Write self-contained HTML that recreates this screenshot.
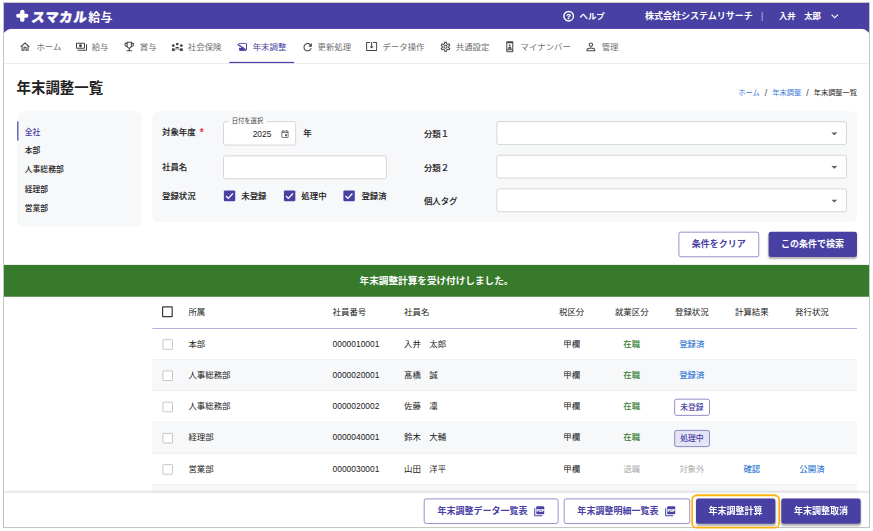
<!DOCTYPE html>
<html lang="ja">
<head>
<meta charset="utf-8">
<title>年末調整一覧</title>
<style>
*{box-sizing:border-box;margin:0;padding:0}
html,body{width:873px;height:531px;background:#fff;overflow:hidden}
body{position:relative;font-family:"Liberation Sans","Noto Sans CJK JP",sans-serif;color:#222}
#frame{position:absolute;left:3px;top:2px;width:867px;height:526px;border:1px solid #c6c6c5;background:#fff}
#app{position:absolute;left:0;top:0;width:1440px;height:872px;transform-origin:0 0;transform:scale(0.6007);background:#fff;font-size:14px;line-height:1.5}
.abs{position:absolute}
/* header */
#hdr{position:absolute;left:0;top:0;width:1440px;height:60px;background:#4840a3;color:#fff}
#logo{position:absolute;left:46px;top:7.700px;white-space:nowrap;line-height:32px;height:32px}
#logo .s{display:inline-block;font-size:22px;font-weight:900;transform:skewX(-7deg);letter-spacing:1.400px;-webkit-text-stroke:.7px #fff}
#logo .k{display:inline-block;font-weight:700;font-size:20px;margin-left:1.500px;position:relative;top:.4px}
.hr{position:absolute;top:0;height:44px;line-height:44px;font-size:14px;font-weight:700;white-space:nowrap}
/* nav */
#navclip{position:absolute;left:0;top:43.300px;width:1440px;height:58.700px;overflow:hidden}
#nav{position:absolute;left:-3px;top:0;width:1446px;height:57.700px;background:#fff;border-radius:16px 16px 0 0;border-bottom:1px solid #d6d6d6}
#nav>*{margin-left:3px;margin-top:.7px}
.tx{position:absolute;top:0;height:56px;line-height:59px;font-size:14px;color:#6e6e6e;white-space:nowrap}
.ic{position:absolute;fill:#444}
.tx.on{color:#4840a3}
.ic.on{fill:#4840a3}
#ul{position:absolute;top:54px;height:2px;background:#4840a3}
h1{position:absolute;left:21px;top:123px;font-size:24px;font-weight:700;line-height:36px;color:#222}
#bc{position:absolute;right:20px;top:139.600px;font-size:12px;line-height:18px;color:#222;white-space:nowrap}
#bc a{color:#3b78d8;text-decoration:none}
#bc i{font-style:normal;margin:0 8.500px;font-size:14.500px;line-height:10px;color:#444;position:relative;top:1.800px}
.panel{position:absolute;background:#f7f8fa;border-radius:10px}
#side div{position:absolute;left:12.500px;font-size:13px;font-weight:500;line-height:20px;white-space:nowrap}
.lbl{position:absolute;font-size:14px;font-weight:500;-webkit-text-stroke:.18px #222;line-height:20px;white-space:nowrap;color:#222}
.inp{position:absolute;background:#fff;border:1px solid #bebebe;border-radius:4px}
.cb{position:absolute;width:18.500px;height:18.500px;background:#4840a3;border-radius:2px}
.cb svg{position:absolute;left:0;top:0;width:18.500px;height:18.500px}
.btn{position:absolute;height:42px;line-height:40px;border-radius:4px;font-size:15px;font-weight:700;text-align:center;white-space:nowrap}
.btn.o{border:1.500px solid #5149a8;color:#4840a3;background:#fff}
.btn.f{background:#4840a3;color:#fff;line-height:42px;box-shadow:0 2px 3px rgba(0,0,0,.3)}
#banner{position:absolute;left:0;top:436px;width:1440px;height:52.600px;background:#377a2c;color:#fff;font-weight:700;font-size:16px;line-height:54px;text-align:center}
#tbl{position:absolute;left:247px;top:488px;width:1173px}
.row{position:absolute;left:0;width:1173px;height:52px;border-bottom:1px solid #e4e4e4}
.row.g{background:#f7f8fa}
.row div,.th div{position:absolute;top:0;height:52px;line-height:51px;font-size:14px;white-space:nowrap}
.c{text-align:center;width:100px}
.th div{line-height:55px}
.chk{position:absolute;left:17px;top:18px;width:16.500px;height:16.500px;border:1.600px solid #a2a2a2;border-radius:1.500px;background:#fff}
.grn{color:#3a7f34;font-weight:500}
.blu{color:#3b7fd6;font-weight:500}
.gry{color:#ababab}
.row .badge{position:absolute;top:12.500px;height:28.500px;line-height:26.500px;border:1px solid #4840a3;border-radius:4px;color:#4840a3;font-size:13px;font-weight:500;text-align:center}
#bar{position:absolute;left:0;top:813.500px;width:1440px;height:58.500px;background:#fff;border-top:1px solid #d9d9d9;box-shadow:0 -1px 3px rgba(0,0,0,.10)}
</style>
</head>
<body>
<div id="frame">
<div id="app">
  <div id="hdr">
    <svg class="abs" style="left:19.800px;top:11.400px;width:21px;height:20.500px" viewBox="0 0 19 20.500" preserveAspectRatio="none"><path d="M9.500 3.400V17.100M3.400 10.250H15.600" stroke="#fff" stroke-width="6.600" stroke-linecap="round" fill="none"/></svg><div id="logo"><span class="s">スマカル</span><span class="k">給与</span></div>
    <svg class="abs" style="left:928.700px;top:10.700px;width:22px;height:22px" viewBox="0 0 24 24"><circle cx="12" cy="12" r="8.700" fill="none" stroke="#fff" stroke-width="2.600"/><text x="12" y="17" font-size="14" font-weight="700" fill="#fff" stroke="#fff" stroke-width=".5" text-anchor="middle" font-family="Liberation Sans, sans-serif">?</text></svg><div class="hr" style="left:958px">ヘルプ</div>
    <div class="hr" style="left:1067px;font-size:15px">株式会社システムリサーチ</div>
    <div class="hr" style="left:1260px;font-weight:400;opacity:.7">|</div>
    <div class="hr" style="left:1290px">入井　太郎</div><svg class="abs" style="left:1371px;top:10px;width:24px;height:24px;fill:#fff" viewBox="0 0 24 24"><path d="M16.590 8.590L12 13.170 7.410 8.590 6 10l6 6 6-6z"/></svg>
  </div>
  <div id="navclip"><div id="nav">
    <svg class="ic" style="left:25.3px;top:19px;width:20px;height:20px" viewBox="0 0 24 24"><path d="M12 5.690l5 4.500V18h-2v-6H9v6H7v-7.810l5-4.500M12 3L2 12h3v8h6v-6h2v6h6v-8h3L12 3z"/></svg><span class="tx" style="left:54px">ホーム</span>
    <svg class="ic" style="left:118.9px;top:19.1px;width:20px;height:20px" viewBox="0 0 24 24"><path d="M19 14V6c0-1.100-.9-2-2-2H3c-1.100 0-2 .9-2 2v8c0 1.100.9 2 2 2h14c1.100 0 2-.9 2-2zm-2 0H3V6h14v8zm-7-7c-1.660 0-3 1.340-3 3s1.340 3 3 3 3-1.340 3-3-1.340-3-3-3zm13 0v11c0 1.100-.9 2-2 2H4v-2h17V7h2z"/></svg><span class="tx" style="left:146px">給与</span>
    <svg class="ic" style="left:198.3px;top:18.3px;width:21px;height:21px" viewBox="0 0 24 24"><path d="M19 5h-2V3H7v2H5c-1.100 0-2 .9-2 2v1c0 2.550 1.920 4.630 4.390 4.940.630 1.500 1.980 2.630 3.610 2.960V19H7v2h10v-2h-4v-3.100c1.630-.330 2.980-1.460 3.610-2.960C19.080 12.630 21 10.550 21 8V7c0-1.100-.9-2-2-2zM5 8V7h2v3.820C5.840 10.400 5 9.300 5 8zm7 6c-1.650 0-3-1.350-3-3V5h6v6c0 1.650-1.350 3-3 3zm7-6c0 1.300-.840 2.400-2 2.820V7h2v1z"/></svg><span class="tx" style="left:226px">賞与</span>
    <svg class="ic" style="left:279.300px;top:21.900px;width:19px;height:14px" viewBox="0 0 19 14"><circle cx="2.800" cy="4.900" r="2.300"/><circle cx="9.450" cy="2.400" r="2.300"/><circle cx="16.200" cy="4.900" r="2.300"/><path d="M.3 13.900V11a1.700 1.700 0 0 1 1.700-1.700H3.700A1.700 1.700 0 0 1 5.400 11v2.900z"/><path d="M13.600 13.900V11a1.700 1.700 0 0 1 1.700-1.700H17a1.700 1.700 0 0 1 1.700 1.700v2.900z"/><path d="M6.300 9.400V8.700a1.500 1.500 0 0 1 1.500-1.500H11.100a1.500 1.500 0 0 1 1.500 1.500v.7z"/><path d="M6.300 9.400H12.600L13.500 11.700H5.400z" opacity=".45"/></svg><span class="tx" style="left:306px">社会保険</span>
    <svg class="ic on" style="left:388.200px;top:21.900px;width:16.600px;height:13.800px;color:#4840a3" viewBox="0 0 17 14"><path d="M5.200 1.050H15a1 1 0 0 1 1 1V12a1 1 0 0 1-1 1H5a1 1 0 0 1-1-1V8.700" fill="none" stroke="currentColor" stroke-width="1.700"/><path d="M0 3L5.600 0.200V2z"/><path d="M4 9.200H12.500V13.500H4z"/><path d="M12.500 10.500H15.500V13.500H12.500z" opacity=".7"/><path d="M1.200 2.900L12.500 10.400" fill="none" stroke="currentColor" stroke-width="2.600"/><path d="M4.200 3.300L11 7.800" fill="none" stroke="#fff" stroke-width="1.400" stroke-dasharray="1.600 2.800"/></svg><span class="tx on" style="left:414px">年末調整</span>
    <svg class="ic" style="left:494.500px;top:18.700px;width:21px;height:21px" viewBox="0 0 24 24"><path d="M17.650 6.350C16.200 4.900 14.210 4 12 4c-4.420 0-7.990 3.580-7.990 8s3.570 8 7.990 8c3.730 0 6.840-2.550 7.730-6h-2.080c-.820 2.330-3.040 4-5.650 4-3.310 0-6-2.690-6-6s2.690-6 6-6c1.660 0 3.140.690 4.220 1.780L13 11h7V4l-2.350 2.350z"/></svg><span class="tx" style="left:522px">更新処理</span>
    <svg class="ic" style="left:602.3px;top:18.1px;width:20px;height:20px" viewBox="0 0 24 24"><path d="M12 16.500l4-4h-3v-9h-2v9H8l4 4zm9-13h-6v1.990h6v14.030H3V5.490h6V3.500H3c-1.100 0-2 .9-2 2v14c0 1.100.9 2 2 2h18c1.100 0 2-.9 2-2v-14c0-1.100-.9-2-2-2z"/></svg><span class="tx" style="left:630px">データ操作</span>
    <svg class="ic" style="left:724.5px;top:19.1px;width:20px;height:20px" viewBox="0 0 24 24"><path d="M19.430 12.980c.040-.320.070-.640.070-.980 0-.340-.030-.660-.070-.980l2.110-1.650c.190-.150.240-.420.120-.640l-2-3.460c-.090-.160-.260-.250-.440-.250-.060 0-.120.010-.170.030l-2.490 1c-.520-.4-1.080-.730-1.690-.980l-.380-2.650C14.460 2.180 14.250 2 14 2h-4c-.250 0-.460.180-.490.420l-.380 2.650c-.610.250-1.170.590-1.690.980l-2.490-1c-.060-.020-.120-.030-.180-.030-.170 0-.340.090-.430.250l-2 3.460c-.130.220-.070.490.12.640l2.110 1.650c-.040.320-.070.650-.070.980 0 .330.030.660.070.980l-2.110 1.650c-.190.150-.240.420-.120.640l2 3.460c.090.160.260.250.440.250.060 0 .120-.010.170-.030l2.490-1c.520.4 1.080.730 1.690.980l.380 2.650c.030.240.240.420.490.420h4c.250 0 .460-.180.490-.420l.380-2.650c.610-.250 1.170-.590 1.690-.980l2.490 1c.060.020.120.030.180.030.170 0 .340-.090.430-.250l2-3.460c.120-.220.070-.490-.120-.640l-2.110-1.650zm-1.980-1.710c.040.310.050.520.050.730 0 .210-.020.430-.050.730l-.140 1.130.890.700 1.080.840-.7 1.210-1.270-.510-1.040-.420-.9.680c-.430.320-.840.560-1.250.730l-1.060.430-.160 1.130-.2 1.350h-1.400l-.190-1.350-.160-1.130-1.060-.430c-.430-.180-.830-.410-1.230-.710l-.910-.7-1.060.430-1.270.510-.7-1.210 1.080-.840.890-.7-.140-1.130c-.030-.310-.050-.540-.050-.740s.020-.430.050-.730l.140-1.130-.890-.7-1.080-.840.7-1.210 1.270.510 1.040.420.9-.680c.430-.320.840-.560 1.250-.730l1.060-.430.160-1.130.2-1.350h1.390l.190 1.350.160 1.130 1.060.430c.430.180.830.410 1.230.710l.910.700 1.060-.430 1.270-.510.7 1.210-1.070.850-.890.700.140 1.130zM12 8c-2.210 0-4 1.790-4 4s1.790 4 4 4 4-1.790 4-4-1.790-4-4-4zm0 6c-1.100 0-2-.9-2-2s.9-2 2-2 2 .9 2 2-.9 2-2 2z"/></svg><span class="tx" style="left:752px">共通設定</span>
    <svg class="ic" style="left:831.7px;top:18.6px;width:20px;height:20px" viewBox="0 0 24 24"><path d="M17 1H7c-1.100 0-2 .9-2 2v18c0 1.100.9 2 2 2h10c1.100 0 2-.9 2-2V3c0-1.100-.9-2-2-2zm0 20H7v-2h10v2zm0-4H7V5h10v12z"/><circle cx="12" cy="9.300" r="1.900"/><path d="M8.300 15.200c0-1.900 2.400-2.800 3.700-2.800s3.700.9 3.700 2.800V16H8.300z"/></svg><span class="tx" style="left:860px">マイナンバー</span>
    <svg class="ic" style="left:965.8px;top:18.1px;width:22px;height:22px" viewBox="0 0 24 24"><path d="M12 5.900c1.160 0 2.100.940 2.100 2.100s-.940 2.100-2.100 2.100S9.900 9.160 9.900 8s.940-2.100 2.100-2.100m0 9c2.970 0 6.100 1.460 6.100 2.100v1.100H5.900V17c0-.640 3.130-2.100 6.100-2.100M12 4C9.790 4 8 5.790 8 8s1.790 4 4 4 4-1.790 4-4-1.790-4-4-4zm0 9c-2.670 0-8 1.340-8 4v3h16v-3c0-2.660-5.330-4-8-4z"/></svg><span class="tx" style="left:995px">管理</span>
    <div id="ul" style="left:375px;width:108px"></div>
  </div></div>
  <h1>年末調整一覧</h1>
  <div id="bc"><a>ホーム</a><i>/</i><a>年末調整</a><i>/</i>年末調整一覧</div>

  <div class="panel" id="side" style="left:22px;top:180px;width:208px;height:192px">
    <div style="top:24.500px;color:#4840a3">全社</div>
    <div style="top:56.300px">本部</div>
    <div style="top:88.100px">人事総務部</div>
    <div style="top:119.900px">経理部</div>
    <div style="top:151.700px">営業部</div>
    <span class="abs" style="left:0;top:16.500px;width:2px;height:32px;background:#4840a3"></span>
  </div>

  <div class="panel" id="flt" style="left:247px;top:180px;width:1173px;height:185px">
    <div class="lbl" style="left:16px;top:25.300px">対象年度<span style="color:#f0323c;-webkit-text-stroke:0 transparent;font-size:17px;position:absolute;left:63px;top:1px;font-weight:700">*</span></div>
    <div class="lbl" style="left:16px;top:83px">社員名</div>
    <div class="lbl" style="left:16px;top:131px">登録状況</div>
    <div class="inp" style="left:118px;top:17px;width:120.500px;height:39.500px"></div>
    <div class="abs" style="left:127px;top:9px;padding:0 5px;background:#fbfbfc;font-size:10.500px;line-height:14px;color:#444;white-space:nowrap">日付を選択</div>
    <div class="abs" style="left:167px;top:28px;font-size:14px;line-height:20px">2025</div>
    <svg class="abs" style="left:212.800px;top:29.500px;width:15.500px;height:15.500px;fill:#555" viewBox="0 0 24 24"><path d="M19 4h-1V2h-2v2H8V2H6v2H5c-1.110 0-1.990.9-1.990 2L3 20c0 1.100.890 2 2 2h14c1.100 0 2-.9 2-2V6c0-1.100-.9-2-2-2zm0 16H5V10h14v10zm0-12H5V6h14v2zm-7 5h5v5h-5z"/></svg><div class="lbl" style="left:251px;top:26px">年</div>
    <div class="inp" style="left:118px;top:73.500px;width:272px;height:39px"></div>
    <div class="cb" style="left:119px;top:131.500px"><svg viewBox="0 0 18 18"><path d="M3.500 9.200L7.200 12.900L14.600 4.900" fill="none" stroke="#fff" stroke-width="2.200"/></svg></div><div class="lbl" style="left:148px;top:131px">未登録</div>
    <div class="cb" style="left:219px;top:131.500px"><svg viewBox="0 0 18 18"><path d="M3.500 9.200L7.200 12.900L14.600 4.900" fill="none" stroke="#fff" stroke-width="2.200"/></svg></div><div class="lbl" style="left:248px;top:131px">処理中</div>
    <div class="cb" style="left:318px;top:131.500px"><svg viewBox="0 0 18 18"><path d="M3.500 9.200L7.200 12.900L14.600 4.900" fill="none" stroke="#fff" stroke-width="2.200"/></svg></div><div class="lbl" style="left:348px;top:131px">登録済</div>
    <div class="lbl" style="left:452px;top:28.200px">分類１</div>
    <div class="lbl" style="left:452px;top:83.500px">分類２</div>
    <div class="lbl" style="left:452px;top:139px">個人タグ</div>
    <div class="inp" style="left:573px;top:17.3px;width:582.500px;height:39px"></div><svg class="abs" style="left:1131px;top:34.5px;width:10.500px;height:5.500px;margin-left:-1px" viewBox="0 0 10 5"><path d="M0 0H10L5 5z" fill="#666"/></svg>
    <div class="inp" style="left:573px;top:73.3px;width:582.500px;height:39px"></div><svg class="abs" style="left:1131px;top:90.5px;width:10.500px;height:5.500px;margin-left:-1px" viewBox="0 0 10 5"><path d="M0 0H10L5 5z" fill="#666"/></svg>
    <div class="inp" style="left:573px;top:129.3px;width:582.500px;height:39px"></div><svg class="abs" style="left:1131px;top:146.5px;width:10.500px;height:5.500px;margin-left:-1px" viewBox="0 0 10 5"><path d="M0 0H10L5 5z" fill="#666"/></svg>
  </div>

  <div class="btn o" style="left:1123px;top:381px;width:134px">条件をクリア</div>
  <div class="btn f" style="left:1272.500px;top:381px;width:147px">この条件で検索</div>

  <div id="banner">年末調整計算を受け付けしました。</div>

  <div id="tbl">
    <div class="th" style="position:absolute;left:0;top:0;width:1173px;height:54px;border-bottom:1.400px solid #807bc9">
      <span class="chk" style="border:2px solid #3a3a3a;left:16px;top:17.300px;width:17.500px;height:17.500px"></span>
      <div style="left:60px">所属</div><div style="left:300px">社員番号</div><div style="left:419px">社員名</div>
      <div class="c" style="left:648px">税区分</div><div class="c" style="left:748px">就業区分</div><div class="c" style="left:848px">登録状況</div><div class="c" style="left:948px">計算結果</div><div class="c" style="left:1048px">発行状況</div>
    </div>
    <div class="row" style="top:54px"><span class="chk"></span><div style="left:60px">本部</div><div style="left:300px">0000010001</div><div style="left:419px">入井　太郎</div><div class="c" style="left:648px">甲欄</div><div class="c grn" style="left:748px">在職</div><div class="c blu" style="left:848px">登録済</div></div>
    <div class="row g" style="top:106px"><span class="chk"></span><div style="left:60px">人事総務部</div><div style="left:300px">0000020001</div><div style="left:419px">髙橋　誠</div><div class="c" style="left:648px">甲欄</div><div class="c grn" style="left:748px">在職</div><div class="c blu" style="left:848px">登録済</div></div>
    <div class="row" style="top:158px"><span class="chk"></span><div style="left:60px">人事総務部</div><div style="left:300px">0000020002</div><div style="left:419px">佐藤　凛</div><div class="c" style="left:648px">甲欄</div><div class="c grn" style="left:748px">在職</div><div class="badge" style="left:868.800px;width:58.800px">未登録</div></div>
    <div class="row g" style="top:210px"><span class="chk"></span><div style="left:60px">経理部</div><div style="left:300px">0000040001</div><div style="left:419px">鈴木　大輔</div><div class="c" style="left:648px">甲欄</div><div class="c grn" style="left:748px">在職</div><div class="badge" style="left:868.800px;width:58.800px;background:#e5e4f4">処理中</div></div>
    <div class="row" style="top:262px"><span class="chk"></span><div style="left:60px">営業部</div><div style="left:300px">0000030001</div><div style="left:419px">山田　洋平</div><div class="c" style="left:648px">甲欄</div><div class="c gry" style="left:748px">退職</div><div class="c gry" style="left:848px">対象外</div><div class="c blu" style="left:948px">確認</div><div class="c blu" style="left:1048px">公開済</div></div>
    <div class="row g" style="top:314px"></div>
  </div>

  <div id="bar">
    <div class="btn o" style="left:699px;top:10px;width:223.500px;text-align:left;padding-left:21.500px">年末調整データ一覧表<svg class="abs" style="left:181px;top:10.600px;width:20px;height:20px;fill:#4840a3" viewBox="0 0 24 24"><path d="M4 6H2v14c0 1.100.9 2 2 2h14v-2H4V6z"/><rect x="6" y="2" width="16" height="16" rx="2"/><text x="14" y="12.700" font-size="7.400" font-weight="700" fill="#fff" stroke="#fff" stroke-width=".35" text-anchor="middle" font-family="Liberation Sans, sans-serif">PDF</text></svg></div>
    <div class="btn o" style="left:932px;top:10px;width:210px;text-align:left;padding-left:21.500px">年末調整明細一覧表<svg class="abs" style="left:166px;top:10.600px;width:20px;height:20px;fill:#4840a3" viewBox="0 0 24 24"><path d="M4 6H2v14c0 1.100.9 2 2 2h14v-2H4V6z"/><rect x="6" y="2" width="16" height="16" rx="2"/><text x="14" y="12.700" font-size="7.400" font-weight="700" fill="#fff" stroke="#fff" stroke-width=".35" text-anchor="middle" font-family="Liberation Sans, sans-serif">PDF</text></svg></div>
    <div class="abs" style="left:1144px;top:3.200px;width:147.500px;height:57.500px;border:3.500px solid #fbb50f;border-radius:9.500px"></div>
    <div class="btn f" style="left:1151.500px;top:10.500px;width:132.500px">年末調整計算</div>
    <div class="btn f" style="left:1294px;top:10.500px;width:132px">年末調整取消</div>
  </div>
</div>
</div>
</body>
</html>
